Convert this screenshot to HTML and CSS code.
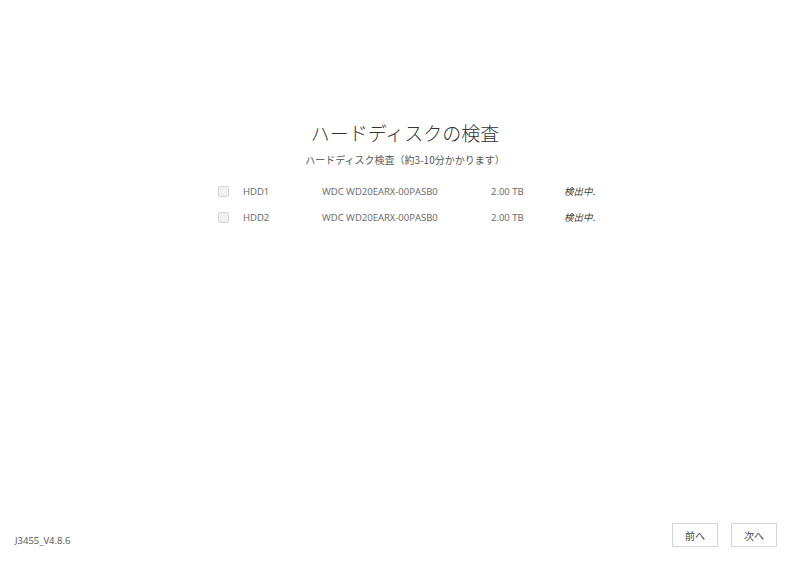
FILE: index.html
```html
<!DOCTYPE html>
<html lang="ja">
<head>
    <meta charset="UTF-8">
    <title>ハードディスクの検査</title>
    <link rel="stylesheet" href="styles.css">
</head>
<body>
    <div class="page">
        <div class="main">
            <h1 class="title">ハードディスクの検査</h1>
            <p class="sub">ハードディスク検査（約3-10分かかります）</p>
            <div class="disks">
                <div class="row">
                    <span class="check"></span>
                    <span class="name">HDD1</span>
                    <span class="model">WDC WD20EARX-00PASB0</span>
                    <span class="size">2.00 TB</span>
                    <span class="status">検出中.</span>
                </div>
                <div class="row">
                    <span class="check"></span>
                    <span class="name">HDD2</span>
                    <span class="model">WDC WD20EARX-00PASB0</span>
                    <span class="size">2.00 TB</span>
                    <span class="status">検出中.</span>
                </div>
            </div>
        </div>
        <div class="footer">
            <span class="version">J3455_V4.8.6</span>
            <div class="buttons">
                <button class="btn">前へ</button>
                <button class="btn">次へ</button>
            </div>
        </div>
    </div>
</body>
</html>
```

FILE: styles.css
```css
*{
    margin: 0;
    padding: 0;
    box-sizing: border-box;
}
body{
    font-family: "Open Sans", "Noto Sans CJK JP", sans-serif;
    background-color: #fff;
    color: #444;
}
.page{
    height: 561px;
    display: flex;
    flex-direction: column;
}
.main{
    flex: 1;
    display: flex;
    flex-direction: column;
    align-items: center;
    padding-top: 118px;
    padding-left: 10px;
}
.title{
    font-family: "Noto Sans CJK JP", sans-serif;
    font-weight: 300;
    font-size: 19px;
    color: #333;
    line-height: 30px;
}
.sub{
    font-family: "Noto Sans CJK JP", sans-serif;
    font-size: 10px;
    color: #555;
    margin-top: 4px;
    line-height: 16px;
}
.disks{
    width: 380px;
    margin-top: 10px;
}
.row{
    display: grid;
    grid-template-columns: 28px 79px 169px 73px auto;
    align-items: center;
    height: 26px;
    font-size: 9.5px;
    color: #666;
}
.check{
    width: 11px;
    height: 11px;
    margin-left: 3px;
    border: 1px solid #d6d6d6;
    border-radius: 2px;
    background-color: #f1f1f1;
}
.status{
    font-family: "Noto Sans CJK JP", sans-serif;
    font-style: italic;
    font-size: 9.5px;
    color: #444;
    white-space: nowrap;
}
.footer{
    display: flex;
    justify-content: space-between;
    align-items: flex-end;
    padding: 0 23px 14px 15px;
}
.version{
    font-size: 9.5px;
    color: #555;
}
.buttons{
    display: flex;
    gap: 13px;
}
.btn{
    width: 46px;
    height: 24px;
    border: 1px solid #d4d4d4;
    background-color: #fff;
    font-family: "Noto Sans CJK JP", sans-serif;
    font-size: 10px;
    color: #444;
}
```
